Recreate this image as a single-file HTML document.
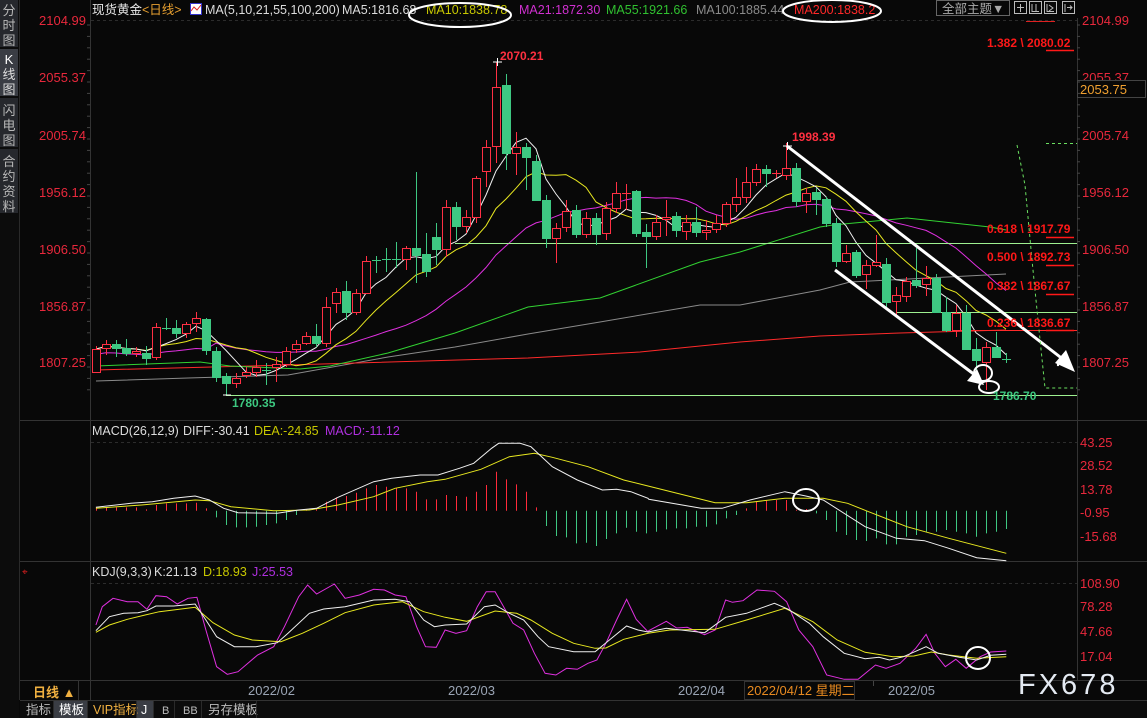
<!DOCTYPE html>
<html><head><meta charset="utf-8">
<style>
html,body{margin:0;padding:0;background:#080808;overflow:hidden}
body{width:1147px;height:718px;position:relative;font-family:"Liberation Sans","Noto Sans CJK SC",sans-serif}
svg{position:absolute;left:0;top:0}
text{font-family:"Liberation Sans","Noto Sans CJK SC",sans-serif}
</style></head>
<body>
<svg id="s" width="1147" height="718" viewBox="0 0 1147 718" xmlns="http://www.w3.org/2000/svg">
<rect width="1147" height="718" fill="#080808"/>
<rect x="0" y="0" width="19" height="718" fill="#0c0c0c"/>
<rect x="0" y="0" width="18" height="47" fill="#26282d"/>
<rect x="0" y="49" width="18" height="47" fill="#3a3d44"/>
<rect x="0" y="98" width="18" height="49" fill="#26282d"/>
<rect x="0" y="149" width="18" height="64" fill="#26282d"/>
<g fill="#b8b8b8" font-size="13" text-anchor="middle">
<text x="9" y="15">分</text><text x="9" y="30">时</text><text x="9" y="45">图</text>
<text x="9" y="64" fill="#fff" font-family="Liberation Serif">K</text><text x="9" y="79" fill="#ddd">线</text><text x="9" y="94" fill="#ddd">图</text>
<text x="9" y="115">闪</text><text x="9" y="130">电</text><text x="9" y="145">图</text>
<text x="9" y="166">合</text><text x="9" y="181">约</text><text x="9" y="196">资</text><text x="9" y="211">料</text>
</g>
<line x1="19.5" y1="0" x2="19.5" y2="700" stroke="#2a2a2a"/>
<g stroke="#333" stroke-width="1">
<line x1="90.5" y1="0" x2="90.5" y2="700"/>
<line x1="1077.5" y1="18" x2="1077.5" y2="680"/>
<line x1="20" y1="420.5" x2="1147" y2="420.5"/>
<line x1="20" y1="561.5" x2="1147" y2="561.5"/>
<line x1="20" y1="680.5" x2="1147" y2="680.5"/>
<line x1="20" y1="700.5" x2="1147" y2="700.5"/>
</g>
<g stroke="#2c2c2c" stroke-dasharray="3,3">
<line x1="91" y1="20.5" x2="1077" y2="20.5"/>
<line x1="91" y1="442.5" x2="1077" y2="442.5"/>
<line x1="91" y1="583.5" x2="1077" y2="583.5"/>
</g>
<g font-size="12.5">
<text x="92" y="14" fill="#e8e8e8">现货黄金</text>
<text x="142" y="14" fill="#e8a030">&lt;日线&gt;</text>
<rect x="190.5" y="3.5" width="11" height="11" fill="#fff" stroke="#33c" stroke-width="1"/>
<polyline points="191,11 194,7 197,10 201,5" fill="none" stroke="#d22" stroke-width="1"/>
<text x="205" y="14" fill="#dcdcdc">MA(5,10,21,55,100,200)</text>
<text x="342" y="14" fill="#dcdcdc">MA5:1816.68</text>
<text x="426" y="14" fill="#c8c800">MA10:1838.78</text>
<text x="519" y="14" fill="#d030d0">MA21:1872.30</text>
<text x="606" y="14" fill="#30c030">MA55:1921.66</text>
<text x="696" y="14" fill="#8a8a8a">MA100:1885.44</text>
<text x="794" y="14" fill="#ff2828">MA200:1838.2</text>
</g>
<ellipse cx="460" cy="15" rx="51" ry="12" fill="none" stroke="#fff" stroke-width="2"/>
<ellipse cx="832" cy="11" rx="49" ry="11" fill="none" stroke="#fff" stroke-width="2"/>
<rect x="936.5" y="0.5" width="73" height="15" fill="none" stroke="#666"/>
<text x="942" y="13" fill="#aaa" font-size="12.5">全部主题▼</text>
<g fill="none" stroke="#bbb">
<rect x="1014.5" y="1.5" width="12" height="12"/><rect x="1029.5" y="1.5" width="12" height="12"/><rect x="1044.5" y="1.5" width="12" height="12"/><rect x="1062.5" y="1.5" width="12" height="12"/>
<path d="M1020.5 4v8M1017 7.5h7M1032 4v8M1032 11.5h7M1036 4v7M1047 4v8M1047 11.5h7M1049 5l4 3-4 3M1065 4v8M1067 7.5h5M1070 5.5l2 2-2 2"/>
</g>
<line x1="1026" y1="21.5" x2="1055" y2="21.5" stroke="#e02020"/>
<g font-size="13" fill="#e8283c">
<g text-anchor="end">
<text x="86" y="25">2104.99</text><text x="86" y="82">2055.37</text><text x="86" y="140">2005.74</text><text x="86" y="197">1956.12</text><text x="86" y="254">1906.50</text><text x="86" y="311">1856.87</text><text x="86" y="367">1807.25</text>
</g>
<text x="1082" y="25">2104.99</text><text x="1082" y="82">2055.37</text><text x="1082" y="140">2005.74</text><text x="1082" y="197">1956.12</text><text x="1082" y="254">1906.50</text><text x="1082" y="311">1856.87</text><text x="1082" y="367">1807.25</text>
<text x="1080" y="447">43.25</text><text x="1080" y="470">28.52</text><text x="1080" y="494">13.78</text><text x="1080" y="517">-0.95</text><text x="1080" y="541">-15.68</text>
<text x="1080" y="588">108.90</text><text x="1080" y="611">78.28</text><text x="1080" y="636">47.66</text><text x="1080" y="661">17.04</text>
</g>
<rect x="1077.5" y="80.5" width="68" height="17" fill="#080808" stroke="#444"/>
<text x="1080" y="94" font-size="13" fill="#f0a030">2053.75</text>
<g id="ticks" stroke="#444"></g>
<g id="chart"></g>
<g font-size="12.5">
<text x="92" y="435" fill="#dcdcdc">MACD(26,12,9)</text>
<text x="183" y="435" fill="#dcdcdc">DIFF:-30.41</text>
<text x="254" y="435" fill="#c8c800">DEA:-24.85</text>
<text x="325" y="435" fill="#b030e0">MACD:-11.12</text>
<text x="92" y="576" fill="#dcdcdc">KDJ(9,3,3)</text>
<text x="154" y="576" fill="#dcdcdc">K:21.13</text>
<text x="203" y="576" fill="#c8c800">D:18.93</text>
<text x="252" y="576" fill="#b030e0">J:25.53</text>
</g>
<text x="22" y="575" fill="#e02020" font-size="10">⌖</text>
<g font-size="12" font-weight="bold">
<text x="500" y="60" fill="#ff3040">2070.21</text>
<text x="792" y="141" fill="#ff3040">1998.39</text>
<text x="232" y="407" fill="#3dc880">1780.35</text>
<text x="993" y="400" fill="#3dc880">1786.70</text>
<text x="987" y="47" fill="#ff1818">1.382 \ 2080.02</text>
<text x="987" y="233" fill="#ff1818">0.618 \ 1917.79</text>
<text x="987" y="261" fill="#ff1818">0.500 \ 1892.73</text>
<text x="987" y="290" fill="#ff1818">0.382 \ 1867.67</text>
<text x="987" y="327" fill="#ff1818">0.236 \ 1836.67</text>
</g>
<g font-size="13" fill="#9aa4b4">
<text x="248" y="695">2022/02</text><text x="448" y="695">2022/03</text><text x="678" y="695">2022/04</text><text x="888" y="695">2022/05</text>
</g>
<line x1="873.5" y1="681" x2="873.5" y2="686" stroke="#444"/>
<rect x="744.5" y="681.5" width="110" height="18" fill="#080808" stroke="#333"/>
<text x="747" y="695" font-size="13" fill="#e88a20">2022/04/12 星期二</text>
<text x="1018" y="694" font-size="29" fill="#e4eaf2" letter-spacing="3">FX678</text>
<text x="33" y="697" font-size="13" fill="#f0b040" font-weight="bold">日线 ▲</text>
<line x1="78.5" y1="681" x2="78.5" y2="700" stroke="#333"/>
<rect x="20" y="701" width="1127" height="17" fill="#0c0c0c"/>
<rect x="54" y="701" width="33" height="17" fill="#3a3d44"/>
<rect x="137" y="701" width="16" height="17" fill="#3a3d44"/>
<g font-size="12.5" fill="#bbb">
<text x="26" y="714">指标</text>
<text x="59" y="714" fill="#fff">模板</text>
<text x="93" y="714" fill="#f0b040">VIP指标</text>
<text x="141" y="714" fill="#fff" font-family="Liberation Serif">J</text>
<text x="162" y="714" font-family="Liberation Serif" font-size="11">B</text>
<text x="183" y="714" font-family="Liberation Serif" font-size="11">BB</text>
<text x="208" y="714">另存模板</text>
</g>
<g stroke="#2a2a2a"><line x1="53.5" y1="701" x2="53.5" y2="718"/><line x1="87.5" y1="701" x2="87.5" y2="718"/><line x1="136.5" y1="701" x2="136.5" y2="718"/><line x1="153.5" y1="701" x2="153.5" y2="718"/><line x1="174.5" y1="701" x2="174.5" y2="718"/><line x1="201.5" y1="701" x2="201.5" y2="718"/><line x1="256.5" y1="701" x2="256.5" y2="718"/></g>
</svg>
<script>
var NS="http://www.w3.org/2000/svg",C=document.getElementById("chart");
function el(t,a,p){var e=document.createElementNS(NS,t);for(var k in a)e.setAttribute(k,a[k]);(p||C).appendChild(e);return e;}
function pl(pts,col,w,extra){var a={points:pts.map(function(p){return p[0].toFixed(1)+","+p[1].toFixed(1)}).join(" "),fill:"none",stroke:col,"stroke-width":w||1};for(var k in extra)a[k]=extra[k];return el("polyline",a);}
var T=document.getElementById("ticks");
for(var y=25;y<400;y+=11.4){el("line",{x1:87,y1:y,x2:90,y2:y},T);el("line",{x1:1077,y1:y,x2:1080,y2:y},T);}
var D=[
"r 349 372 346 372","r 344 348 340 355","g 344 348 340 357","g 348 353 339 356","r 351 353 347 357","g 353 358 346 365","r 327 357 323 360","g 328 329 318 330","g 328 333 320 338","r 324 333 322 338",
"r 318 323 312 332","g 319 350 318 355","g 351 377 347 382","g 376 383 373 395","r 378 383 373 388","r 372 375 367 378","r 367 372 360 377","g 370 371 363 385","r 364 367 357 382","r 351 364 347 367",
"r 344 349 340 353","r 336 343 332 345","g 336 343 324 347","r 307 343 297 347","r 292 303 288 313","g 291 312 281 320","r 293 312 289 315","r 261 293 256 293","g 260 261 256 273","g 259 260 248 272",
"g 259 260 242 268","r 248 259 246 270","g 248 255 172 283","g 254 271 233 277","g 237 249 223 265","r 207 249 200 257","g 207 226 202 240","r 217 226 210 233","r 178 217 176 223","r 147 171 140 187",
"r 87 146 62 163","g 85 153 74 170","r 147 153 132 175","g 147 157 143 190","g 161 200 155 200","g 200 238 195 248","r 228 238 223 263","r 211 227 200 232","g 210 234 205 238","r 218 234 212 238",
"g 218 234 213 245","r 208 233 202 240","r 193 208 182 213","r 193 194 184 210","g 191 233 190 237","g 232 236 224 268","r 222 236 215 240","r 217 219 200 236","g 216 230 212 237","r 222 231 215 240",
"g 222 232 207 237","r 230 232 220 240","r 223 229 215 233","r 204 223 202 227","r 197 204 178 212","r 182 197 167 203","r 169 182 164 186","g 169 173 165 187","r 173 174 170 178","r 168 175 143 180",
"g 168 201 163 207","r 193 201 188 213","g 192 199 188 215","g 199 223 197 227","g 223 261 218 267","r 253 261 245 263","g 252 275 250 278","r 265 274 260 289","r 262 265 235 267","g 264 302 258 310",
"r 295 301 287 315","r 281 296 277 302","g 280 285 248 288","r 278 284 266 296","g 278 312 274 313","g 312 330 297 332","r 313 330 305 337","g 313 349 305 350","g 349 360 338 373","r 347 362 342 390",
"g 347 357 332 358","g 359 360 353 363"];
var RED="#ff3044",GRN="#3ec882";
var closes=[];
D.forEach(function(s){var a=s.split(" ");closes.push(a[0]=="r"?+a[1]:+a[2]);});
pl([[96,381],[188,378],[288,375],[388,357],[455,347],[528,334],[600,322],[700,305],[740,305],[820,290],[850,282],[1006,274]],"#8a8a8a");
pl([[96,370],[288,365],[528,358],[640,352],[740,342],[820,336],[900,333],[1006,330]],"#ff2a2a");
pl([[96,366],[200,362],[230,366],[300,369],[330,366],[388,353],[455,333],[528,307],[600,298],[700,262],[740,252],[820,227],[833,225],[907,218],[990,227],[1006,230]],"#32d232");
function ma(n){var r=[];for(var i=0;i<closes.length;i++){var s=0,k=0;for(var j=Math.max(0,i-n+1);j<=i;j++){s+=closes[j];k++;}r.push([96+10*i,s/k]);}return r;}
var m21=ma(21);m21.forEach(function(p,i){if(i<12)p[1]=p[1]*0.6+362*0.4;});
pl(m21,"#e030e0");
pl(ma(10),"#e8e820");
pl(ma(5),"#f0f0f0");
var LG="#9ef090";
el("line",{x1:455,y1:243.5,x2:1077,y2:243.5,stroke:LG});
el("line",{x1:896,y1:312.5,x2:1077,y2:312.5,stroke:LG});
el("line",{x1:226,y1:395.5,x2:1077,y2:395.5,stroke:LG});
el("line",{x1:955,y1:330.5,x2:1077,y2:330.5,stroke:"#ff2a2a"});
[50,237,265,294,330].forEach(function(y){el("line",{x1:1046,y1:y+.5,x2:1074,y2:y+.5,stroke:"#ff1818","stroke-width":1.5});});
D.forEach(function(s,i){var a=s.split(" "),c=a[0],t=+a[1],b=+a[2],h=+a[3],l=+a[4],x=96+10*i;var col=c=="r"?RED:GRN;
 if(b-t<2){el("line",{x1:x+.5,y1:h,x2:x+.5,y2:l,stroke:col});el("line",{x1:x-4,y1:t+.5,x2:x+5,y2:t+.5,stroke:col});return;}
 if(c=="r"){el("line",{x1:x+.5,y1:h,x2:x+.5,y2:t,stroke:col});el("line",{x1:x+.5,y1:b,x2:x+.5,y2:l,stroke:col});el("rect",{x:x-3.5,y:t+.5,width:8,height:b-t,fill:"#080808",stroke:col});}
 else{el("line",{x1:x+.5,y1:h,x2:x+.5,y2:l,stroke:col});el("rect",{x:x-4,y:t,width:9,height:b-t+1,fill:col});}
});
el("path",{d:"M493 62h9M497.5 58v8M783 146h9M787.5 142v8M223 395h8",stroke:"#fff"});
el("line",{x1:787,y1:146,x2:1064,y2:360,stroke:"#fff","stroke-width":3});
el("path",{d:"M1075 372 L1055 363 L1066 350 Z",fill:"#fff"});
el("line",{x1:835,y1:270,x2:975,y2:375,stroke:"#fff","stroke-width":3});
el("path",{d:"M984 385 L967 381 L977 369 Z",fill:"#fff"});
el("ellipse",{cx:983,cy:373,rx:9,ry:8,fill:"none",stroke:"#fff","stroke-width":2});
el("ellipse",{cx:989,cy:387,rx:10,ry:6,fill:"none",stroke:"#fff","stroke-width":2});
el("circle",{cx:1058,cy:365,r:1.2,fill:"#fff"});
pl([[1017,145],[1025,185],[1032,260],[1038,320],[1045,388],[1077,388]],"#6ae060",1,{"stroke-dasharray":"3,3"});
el("line",{x1:1046,y1:143.5,x2:1077,y2:143.5,stroke:"#6ae060","stroke-dasharray":"3,3"});
var hist=[3.3,3.3,3.3,3.3,3.3,1.3,5.7,7.3,7.3,7.3,8,2.3,-6.7,-14.3,-16.7,-16.7,-16,-14.3,-12.7,-9.3,-4.3];
[268,268,245,232,228,218,205,195,200,205,205,215,238,238,225,228,230,215,195,155,178,193,215,262].forEach(function(v){hist.push((272-v)/3);});
[318,348,352,370,368,378].forEach(function(v){hist.push((272-v)/3);});
[362,345,328,340,345,340,333,330,330,325,325,318,300,290,270,250,245,245,245,274,272,285,305,340,350,365,368,360,378,378,355,350,340,340,335,340,345,355,345,340,332].forEach(function(v){hist.push((277-v)/3);});
var Z=510.7;
hist.forEach(function(v,i){if(i>91)return;var x=96+10*i+.5;if(Math.abs(v)<0.5)return;el("line",{x1:x,y1:Z,x2:x,y2:Z-v,stroke:v>0?"#ff2a3a":"#3ec882"});});
function zp(arr,ox,sx,oy){return arr.map(function(p){return [ox+p[0]/sx,oy+p[1]/3];});}
var W9=[[22,262],[120,250],[180,245],[240,235],[300,228],[340,240],[380,265],[420,278],[530,280],[590,270],[640,265],[700,232],[800,185],[850,175],[930,165],[980,165],[1040,145],[1080,130],[1130,85],[1150,70],[1210,70],[1240,80],[1300,140],[1370,180],[1440,210],[1480,208],[1520,215],[1568,235]];
var W10=[[140,238],[290,265],[350,265],[430,240],[530,215],[590,228],[640,240],[760,320],[850,355],[930,362],[1000,385],[1080,413],[1165,422]];
var Y9=[[22,265],[150,255],[300,240],[340,242],[400,260],[520,272],[620,270],[700,255],[800,230],[860,205],[950,185],[1000,178],[1100,148],[1180,110],[1250,100],[1300,112],[1400,140],[1500,180],[1568,198]];
var Y10=[[330,248],[420,248],[530,235],[640,235],[710,250],[770,275],[880,320],[1000,355],[1165,400]];
pl(zp(Y9,88,2.8,420).concat(zp(Y10,600,2.867,420)),"#e8e820");
pl(zp(W9,88,2.8,420).concat(zp(W10,600,2.867,420)),"#f0f0f0");
var J9=[[22,615],[40,560],[70,535],[110,545],[140,545],[165,568],[190,527],[220,530],[250,552],[280,535],[305,532],[330,630],[360,740],[390,763],[420,755],[475,705],[520,680],[550,620],[590,530],[615,495],[640,522],[690,492],[720,535],[760,525],[800,508],[830,510],[860,525],[890,530],[920,620],[945,680],[975,682],[1000,630],[1030,640],[1060,632],[1090,560],[1115,515],[1140,515],[1190,610],[1220,630],[1250,700],[1280,760],[1310,765],[1340,745],[1370,748],[1400,730],[1425,720],[1450,670],[1480,600],[1508,538],[1535,598],[1568,635]];
var J10=[[140,632],[190,604],[220,624],[250,622],[300,644],[330,630],[360,540],[380,547],[410,542],[450,510],[500,514],[535,545],[570,630],[610,680],[650,765],[700,778],[740,778],[790,735],[820,745],[860,730],[905,685],[935,643],[960,700],[990,740],[1020,718],[1050,745],[1090,710],[1120,696],[1165,693]];
var K9=[[22,632],[60,590],[100,580],[140,578],[165,572],[190,558],[240,558],[300,552],[330,600],[360,650],[410,680],[470,680],[530,668],[560,640],[620,580],[660,567],[720,560],[800,540],[860,538],[900,545],[940,600],[970,620],[1000,615],[1060,612],[1110,560],[1140,555],[1180,580],[1220,600],[1260,650],[1290,680],[1360,695],[1420,695],[1460,660],[1508,618],[1540,630],[1568,636]];
var K10=[[190,625],[300,638],[360,592],[420,580],[500,550],[540,568],[600,610],[640,650],[700,700],[760,716],[800,712],[830,720],[870,710],[935,680],[970,700],[1030,712],[1080,720],[1120,706],[1165,703]];
var D9=[[22,637],[60,615],[110,598],[160,585],[200,575],[300,562],[350,608],[410,645],[460,660],[540,665],[600,640],[660,610],[720,578],[800,555],[880,545],[940,575],[1000,592],[1060,604],[1140,573],[1200,580],[1240,600],[1300,640],[1360,670],[1420,685],[1450,684],[1500,658],[1568,640]];
var D10=[[200,630],[330,628],[420,600],[530,565],[610,605],[680,660],[760,697],[840,710],[900,708],[950,696],[1000,705],[1080,715],[1165,710]];
pl(zp(J9,88,2.8,420).concat(zp(J10,600,2.867,420)),"#e030e0");
pl(zp(D9,88,2.8,420).concat(zp(D10,600,2.867,420)),"#e8e820");
pl(zp(K9,88,2.8,420).concat(zp(K10,600,2.867,420)),"#f0f0f0");
el("ellipse",{cx:806,cy:500,rx:13,ry:11,fill:"none",stroke:"#fff","stroke-width":2});
el("ellipse",{cx:978,cy:658,rx:12,ry:11,fill:"none",stroke:"#fff","stroke-width":2});
</script>
</body></html>
